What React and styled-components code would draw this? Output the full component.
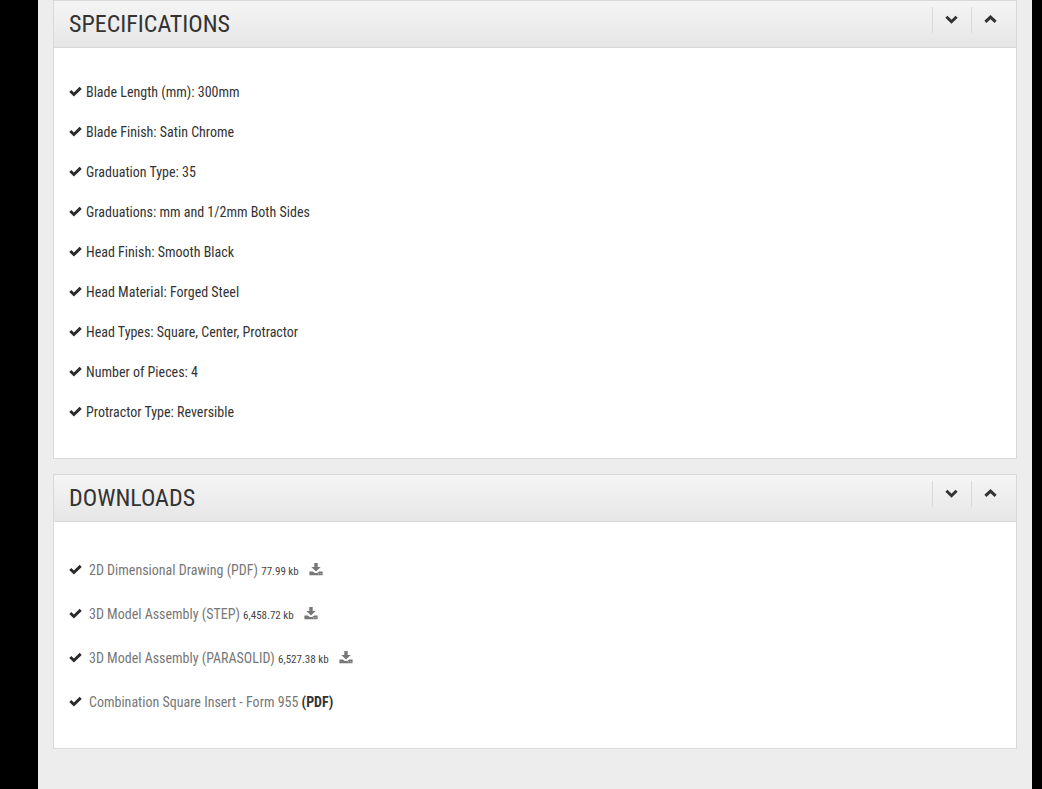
import React from "react";
import styled, { createGlobalStyle } from "styled-components";

const specifications = [
  "Blade Length (mm): 300mm",
  "Blade Finish: Satin Chrome",
  "Graduation Type: 35",
  "Graduations: mm and 1/2mm Both Sides",
  "Head Finish: Smooth Black",
  "Head Material: Forged Steel",
  "Head Types: Square, Center, Protractor",
  "Number of Pieces: 4",
  "Protractor Type: Reversible",
];

const downloads = [
  { name: "2D Dimensional Drawing (PDF)", size: "77.99 kb" },
  { name: "3D Model Assembly (STEP)", size: "6,458.72 kb" },
  { name: "3D Model Assembly (PARASOLID)", size: "6,527.38 kb" },
  { name: "Combination Square Insert - Form 955", type: "(PDF)" },
];

function Check() {
  return (
    <CheckIcon viewBox="0 0 13 12" aria-hidden="true">
      <path d="M1.3 5 L4.9 8.5 L11.7 1.9" />
    </CheckIcon>
  );
}

function Chevron({ up }) {
  return (
    <ChevronIcon viewBox="0 0 14 10" aria-hidden="true">
      <path d={up ? "M1.4 6.9 L6.5 2.1 L11.6 6.9" : "M1.4 1.7 L6.5 6.7 L11.6 1.7"} />
    </ChevronIcon>
  );
}

function DownloadGlyph() {
  return (
    <TrayIcon viewBox="0 0 14 14" aria-hidden="true">
      <path d="M5.3 0h3.4v3.9h3L7 8.6 2.3 3.9h3z" />
      <path
        fillRule="evenodd"
        d="M0.4 8.4h3.5L5.8 10h2.4l1.9-1.6h3.5v3.9H0.4zM9.2 10.6v.7h.9v-.7zM11.4 10.6v.7h.9v-.7z"
      />
    </TrayIcon>
  );
}

function Panel({ title, children }) {
  return (
    <Card>
      <Header>
        <Title>{title}</Title>
        <Controls>
          <ControlButton type="button" aria-label={`Expand ${title}`}>
            <Chevron />
          </ControlButton>
          <ControlButton type="button" aria-label={`Collapse ${title}`}>
            <Chevron up />
          </ControlButton>
        </Controls>
      </Header>
      {children}
    </Card>
  );
}

export default function App() {
  return (
    <>
      <GlobalStyle />
      <Page>
        <Panel title="SPECIFICATIONS">
          <SpecList>
            {specifications.map((text) => (
              <SpecItem key={text}>
                <Check />
                <span>{text}</span>
              </SpecItem>
            ))}
          </SpecList>
        </Panel>

        <Panel title="DOWNLOADS">
          <DownloadList>
            {downloads.map(({ name, size, type }) => (
              <DownloadItem key={name}>
                <Check />
                <p>
                  <FileLink href="#">{name}</FileLink>{" "}
                  {size && <small>{size}</small>}
                  {type && <strong>{type}</strong>}
                </p>
                {size && (
                  <IconLink href="#" aria-label={`Download ${name}`}>
                    <DownloadGlyph />
                  </IconLink>
                )}
              </DownloadItem>
            ))}
          </DownloadList>
        </Panel>
      </Page>
    </>
  );
}

const GlobalStyle = createGlobalStyle`
  * {
    box-sizing: border-box;
  }

  body {
    margin: 0;
    background: #000;
    color: #333;
    font-family: "Roboto Condensed", "Liberation Sans Narrow", Roboto, sans-serif;
    font-size: 14px;
    line-height: 20px;
  }
`;

const Page = styled.main`
  min-height: 100vh;
  margin: 0 10px 0 38px;
  padding: 0 15px 40px;
  background: #ededed;
`;

const Card = styled.section`
  margin-bottom: 15px;
  border: 1px solid #d9d9d9;
  background: #fff;
`;

const Header = styled.header`
  display: flex;
  align-items: flex-start;
  justify-content: space-between;
  height: 47px;
  padding: 6px 6px 0 15px;
  border-bottom: 1px solid #d9d9d9;
  background: linear-gradient(#f5f5f5, #e6e6e6);
`;

const Title = styled.h2`
  margin: 0;
  font-size: 24px;
  font-weight: 400;
  line-height: 34px;
`;

const Controls = styled.div`
  display: flex;
`;

const ControlButton = styled.button`
  display: flex;
  align-items: center;
  justify-content: center;
  width: 39px;
  height: 26px;
  padding: 0;
  border: 0;
  border-left: 1px solid #d9d9d9;
  background: none;
  color: #333;
  cursor: pointer;
`;

const ChevronIcon = styled.svg`
  width: 14px;
  height: 10px;
  fill: none;
  stroke: currentColor;
  stroke-width: 3;
`;

const CheckIcon = styled.svg`
  flex: none;
  width: 13px;
  height: 12px;
  fill: none;
  stroke: #2b2b2b;
  stroke-width: 3;
`;

const TrayIcon = styled.svg`
  display: block;
  width: 14px;
  height: 14px;
  fill: currentColor;
`;

const List = styled.ul`
  margin: 0;
  list-style: none;
`;

const SpecList = styled(List)`
  padding: 24px 15px 26px;
`;

const DownloadList = styled(List)`
  padding: 26px 15px 24px;
`;

const SpecItem = styled.li`
  display: flex;
  align-items: center;
  gap: 4px;
  height: 40px;
`;

const DownloadItem = styled.li`
  display: flex;
  align-items: center;
  gap: 7px;
  height: 44px;

  p {
    margin: 0;
  }

  small {
    color: #444;
    font-size: 11px;
    line-height: 1;
  }
`;

const FileLink = styled.a`
  color: #777;
  text-decoration: none;
`;

const IconLink = styled.a`
  margin-left: 3px;
  color: #777;
`;
